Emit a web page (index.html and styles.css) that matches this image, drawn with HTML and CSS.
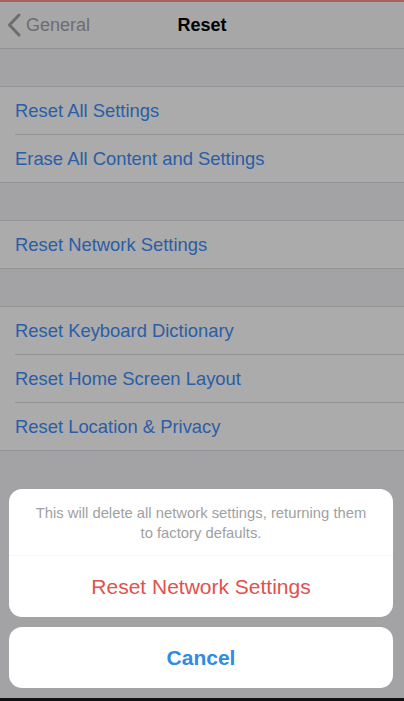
FILE: index.html
```html
<!DOCTYPE html>
<html>
<head>
	<title>Reset</title>
	<link rel="stylesheet" href="styles.css">
</head>
<body>
	<div class="screen">
		<div class="topline"></div>
		<div class="navbar">
			<a class="back">
				<svg width="14" height="24" viewBox="0 0 14 24"><path d="M12 2 L2.5 12 L12 22" fill="none" stroke="currentColor" stroke-width="3" stroke-linecap="round" stroke-linejoin="round"/></svg>
				<span>General</span>
			</a>
			<div class="title">Reset</div>
		</div>

		<div class="group">
			<div class="row">Reset All Settings</div>
			<div class="row">Erase All Content and Settings</div>
		</div>
		<div class="group">
			<div class="row">Reset Network Settings</div>
		</div>
		<div class="group">
			<div class="row">Reset Keyboard Dictionary</div>
			<div class="row">Reset Home Screen Layout</div>
			<div class="row">Reset Location &amp; Privacy</div>
		</div>

		<div class="dim"></div>

		<div class="sheet">
			<div class="card">
				<div class="message">This will delete all network settings, returning them to factory defaults.</div>
				<div class="action danger">Reset Network Settings</div>
			</div>
			<div class="card">
				<div class="action cancel">Cancel</div>
			</div>
		</div>
		<div class="bottomline"></div>
	</div>
</body>
</html>
```

FILE: styles.css
```css
body {
	margin: 0;
	font-family: "Liberation Sans", Arial, sans-serif;
}

.screen {
	position: relative;
	width: 404px;
	height: 701px;
	overflow: hidden;
	background: #f3f2f6;
	display: flex;
	flex-direction: column;
}

.topline {
	height: 2px;
	background: #ff8f8f;
}

.navbar {
	position: relative;
	height: 46px;
	background: #fafafb;
	border-bottom: 1px solid #d9d8dc;
	display: flex;
	align-items: center;
	justify-content: center;
}

.back {
	position: absolute;
	left: 7px;
	top: 11px;
	display: flex;
	align-items: center;
	gap: 5px;
	color: #a3a2a6;
	font-size: 18px;
}

.title {
	font-weight: bold;
	font-size: 18px;
	color: #000;
}

.group {
	margin-top: 37px;
	background: #fff;
	border-top: 1px solid #dcdbdf;
	border-bottom: 1px solid #dcdbdf;
}

.row {
	height: 47px;
	line-height: 47px;
	margin-left: 15px;
	font-size: 18.4px;
	color: #3f8df8;
}

.row + .row {
	border-top: 1px solid #dcdbdf;
}

.dim {
	position: absolute;
	inset: 0;
	background: rgba(0, 0, 0, 0.33);
}

.sheet {
	position: absolute;
	left: 9px;
	width: 384px;
	top: 489px;
	display: flex;
	flex-direction: column;
	gap: 10px;
}

.card {
	background: #fff;
	border-radius: 13px;
	text-align: center;
}

.message {
	padding: 14px 22px 0;
	height: 67px;
	box-sizing: border-box;
	font-size: 14.8px;
	line-height: 20px;
	color: #a09fa2;
	border-bottom: 1px solid #f7f7f8;
}

.action {
	height: 61px;
	line-height: 61px;
	font-size: 21px;
}

.danger {
	color: #e2514b;
	line-height: 62px;
}

.cancel {
	color: #2f8be3;
	font-weight: bold;
}

.bottomline {
	position: absolute;
	left: 0;
	right: 0;
	bottom: 0;
	height: 3px;
	background: #111;
}
```
